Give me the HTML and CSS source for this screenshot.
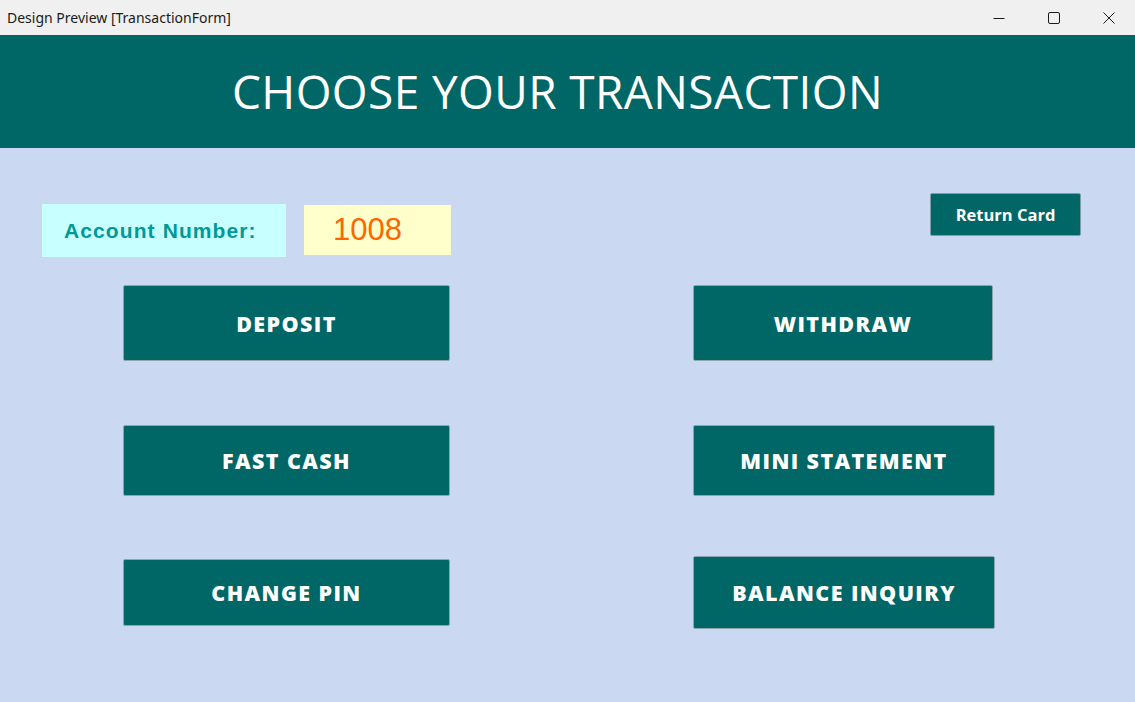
FILE: index.html
```html
<!DOCTYPE html>
<html>
<head>
<meta charset="utf-8">
<link rel="stylesheet" href="styles.css">
</head>
<body>
<div class="window">
  <div class="titlebar">
    <span class="title">Design Preview [TransactionForm]</span>
    <div class="controls">
      <span class="ctl"><svg width="12" height="12" viewBox="0 0 12 12"><path d="M0.5 6.5 H11.5" stroke="#1a1a1a" stroke-width="1"/></svg></span>
      <span class="ctl"><svg width="12" height="12" viewBox="0 0 12 12"><rect x="0.5" y="0.5" width="11" height="11" rx="1.5" fill="none" stroke="#1a1a1a" stroke-width="1"/></svg></span>
      <span class="ctl"><svg width="12" height="12" viewBox="0 0 12 12"><path d="M0.5 0.5 L11.5 11.5 M11.5 0.5 L0.5 11.5" stroke="#1a1a1a" stroke-width="1"/></svg></span>
    </div>
  </div>
  <header class="header">CHOOSE YOUR TRANSACTION</header>
  <main class="content">
    <div class="toprow">
      <div class="account">
        <div class="acc-label">Account Number:</div>
        <div class="acc-num">1008</div>
      </div>
      <button class="return">Return Card</button>
    </div>
    <div class="grid">
      <button class="btn c1 r1 wide h76">DEPOSIT</button>
      <button class="btn c2 r1 w300 h76">WITHDRAW</button>
      <button class="btn c1 r2 wide h71">FAST CASH</button>
      <button class="btn c2 r2 w302 h71">MINI STATEMENT</button>
      <button class="btn c1 r3 wide h67">CHANGE PIN</button>
      <button class="btn c2 r3 w302 h73">BALANCE INQUIRY</button>
    </div>
  </main>
</div>
</body>
</html>
```
FILE: styles.css
```css
* { box-sizing: border-box; }
html, body { margin: 0; padding: 0; }
body { width: 1135px; height: 702px; overflow: hidden; background: #cbd8f2; font-family: "Open Sans", "Noto Sans", sans-serif; }
.window { display: flex; flex-direction: column; height: 702px; }
.titlebar { height: 35px; background: #f0f0f0; display: flex; align-items: center; justify-content: space-between; }
.title { font-family: "Noto Sans", "Open Sans", sans-serif; font-size: 14px; color: #1a1a1a; padding-left: 7px; padding-bottom: 1px; }
.controls { display: flex; height: 35px; }
.ctl { width: 55px; display: flex; align-items: center; justify-content: center; padding-left: 2px; }
.header { height: 113px; background: #006666; color: #ffffff; display: flex; align-items: center; justify-content: center; font-size: 46px; font-weight: 400; letter-spacing: 0.4px; padding-right: 20px; padding-bottom: 2px; }
.content { flex: 1; background: #cbd8f2; }
.toprow { display: flex; justify-content: space-between; align-items: flex-start; padding-left: 42px; padding-right: 54px; }
.account { display: flex; align-items: flex-start; gap: 18px; margin-top: 56px; }
.acc-label { width: 244px; height: 53px; background: #c8ffff; color: #009999; font-family: "Liberation Sans", Arial, sans-serif; font-weight: 700; font-size: 21px; letter-spacing: 1.1px; display: flex; align-items: center; padding-left: 22px; }
.acc-num { width: 147px; height: 50px; margin-top: 1px; background: #ffffcc; color: #ff6600; font-family: "Liberation Sans", Arial, sans-serif; font-size: 31px; display: flex; align-items: center; padding-left: 29px; }
.return { margin-top: 45px; width: 151px; height: 43px; background: #006666; color: #fff; border: 1px solid #7a9fa8; border-radius: 2px; font-family: "Open Sans", sans-serif; font-weight: 700; font-size: 16.5px; padding: 0; padding-bottom: 1px; }
.grid { display: grid; grid-template-columns: 327px 302px; grid-template-rows: 76px 64px 71px 60px 73px; column-gap: 243px; padding-left: 123px; margin-top: 28px; }
.btn { background: #006666; color: #ffffff; border: 1px solid #8aa6ad; border-radius: 2px; font-family: "Open Sans", sans-serif; font-weight: 800; font-size: 21.5px; letter-spacing: 1.4px; padding: 0; align-self: center; justify-self: start; }
.c1 { grid-column: 1; }
.c2 { grid-column: 2; }
.r1 { grid-row: 1; }
.r2 { grid-row: 3; }
.r3 { grid-row: 5; }
.wide { width: 327px; }
.w300 { width: 300px; }
.w302 { width: 302px; }
.h76 { height: 76px; }
.h71 { height: 71px; }
.h67 { height: 67px; }
.h73 { height: 73px; }
```
